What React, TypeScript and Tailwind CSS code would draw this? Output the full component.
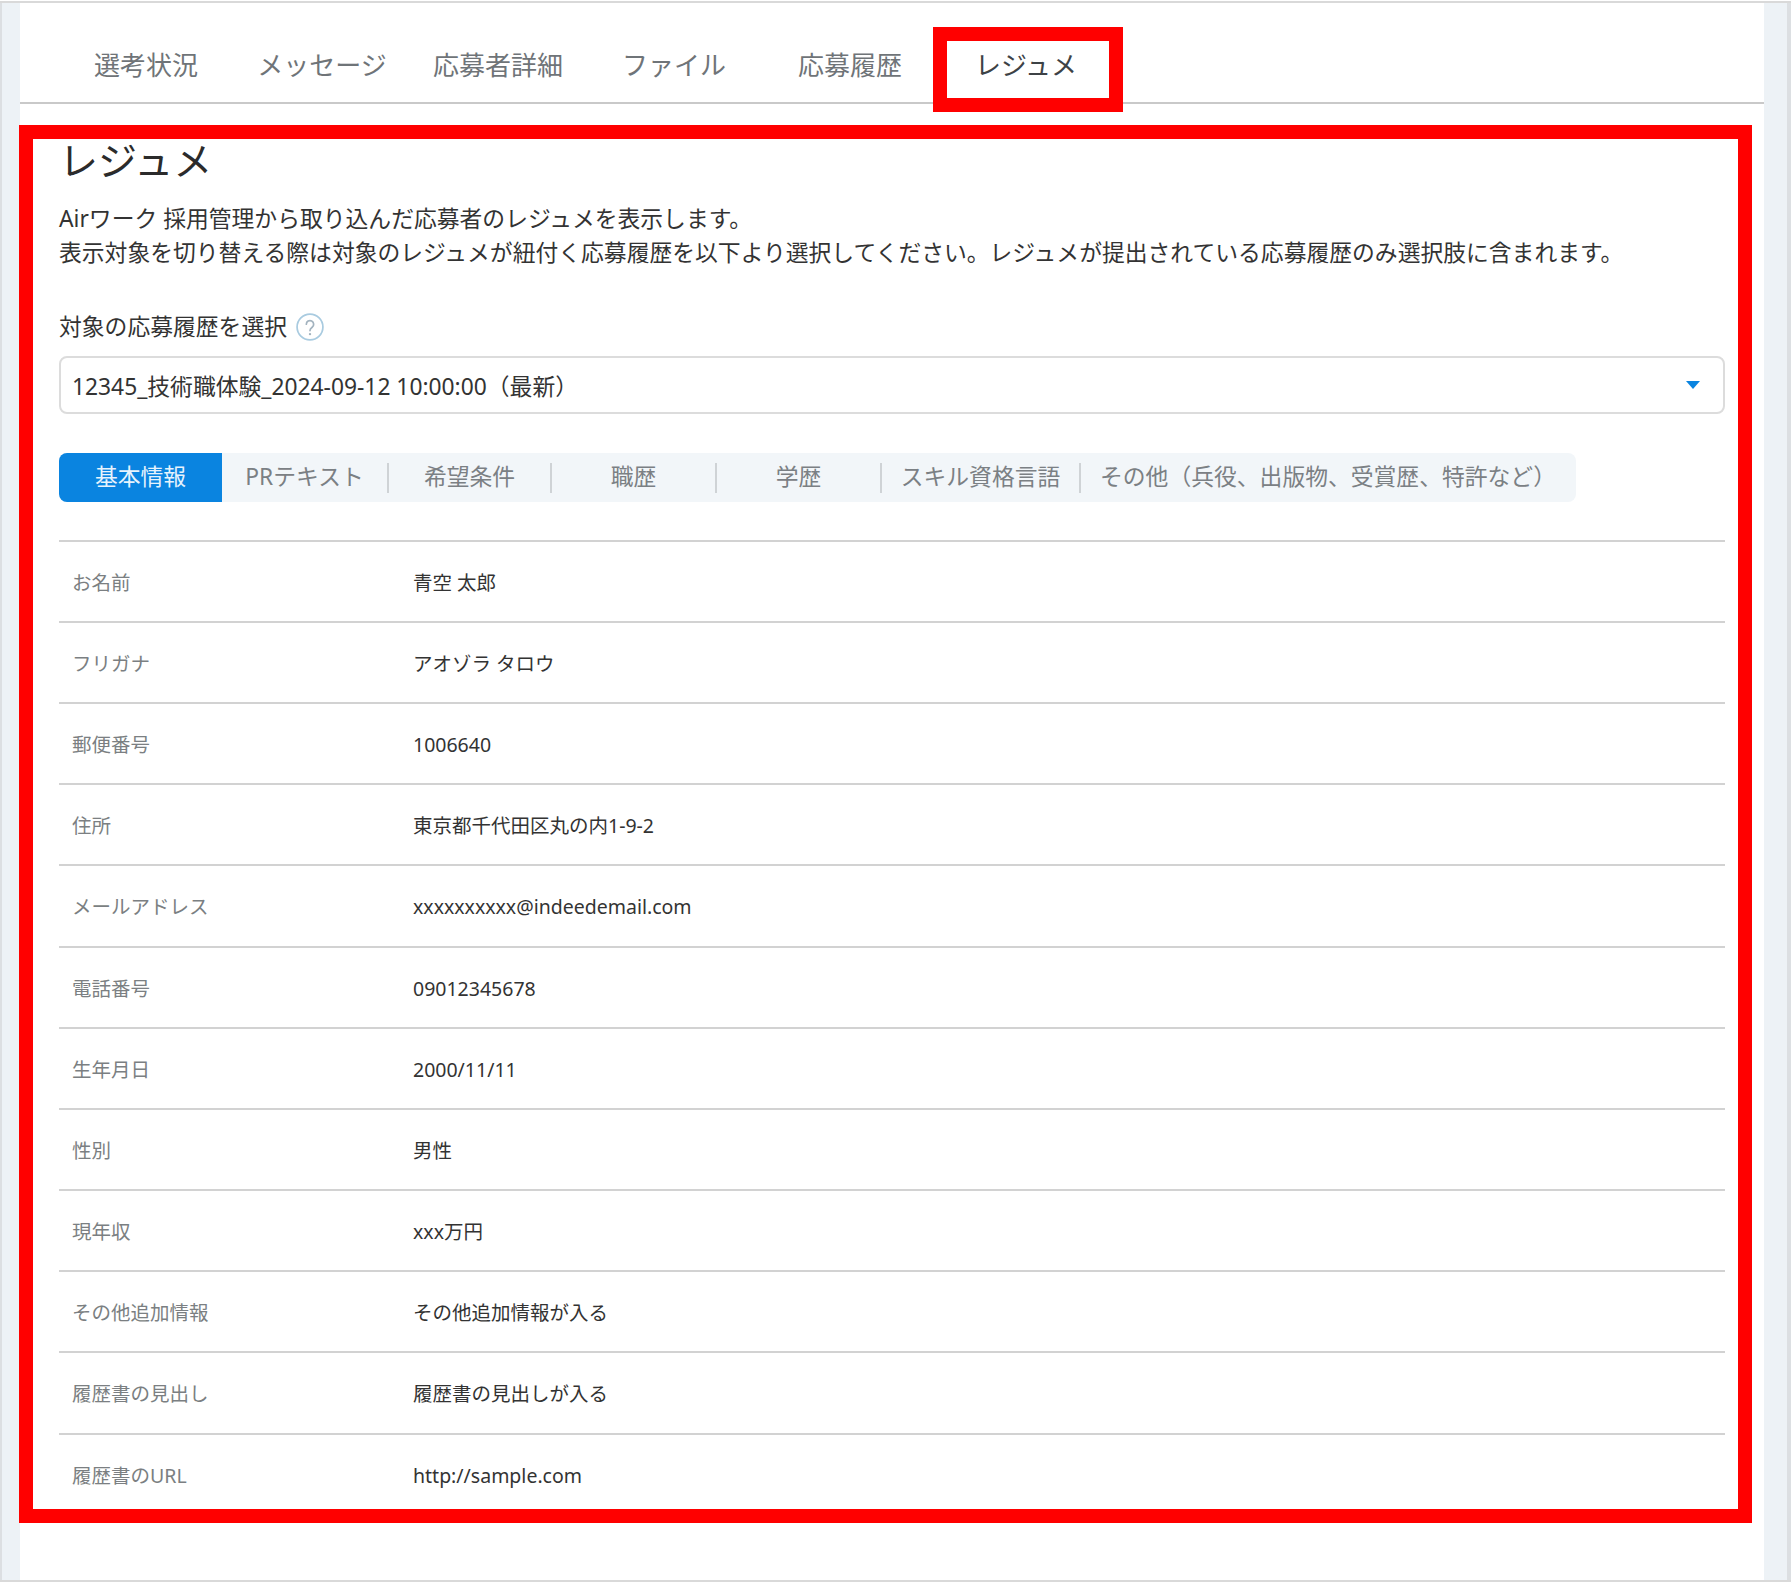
import React from 'react';

const topTabs = ['選考状況', 'メッセージ', '応募者詳細', 'ファイル', '応募履歴'];

const segments = [
  { label: 'PRテキスト', width: 'w-[167px]' },
  { label: '希望条件', width: 'w-[163px]' },
  { label: '職歴', width: 'w-[165px]' },
  { label: '学歴', width: 'w-[165px]' },
  { label: 'スキル資格言語', width: 'w-[199px]' },
];

const rows = [
  ['お名前', '青空 太郎'],
  ['フリガナ', 'アオゾラ タロウ'],
  ['郵便番号', '1006640'],
  ['住所', '東京都千代田区丸の内1-9-2'],
  ['メールアドレス', 'xxxxxxxxxx@indeedemail.com'],
  ['電話番号', '09012345678'],
  ['生年月日', '2000/11/11'],
  ['性別', '男性'],
  ['現年収', 'xxx万円'],
  ['その他追加情報', 'その他追加情報が入る'],
  ['履歴書の見出し', '履歴書の見出しが入る'],
  ['履歴書のURL', 'http://sample.com'],
];

const HelpIcon: React.FC = () => (
  <svg viewBox="0 0 26 26" className="w-[28px] h-[28px] ml-[9px]">
    <circle cx="13" cy="13" r="12" fill="none" stroke="#a9cbe0" strokeWidth="1.6" />
    <path d="M9.6 10.4a3.4 3.4 0 1 1 5.4 2.8c-1.2.9-2 1.5-2 3.1" fill="none" stroke="#a3b3bf" strokeWidth="1.6" strokeLinecap="round" />
    <circle cx="13" cy="19.6" r="1.1" fill="#a3b3bf" />
  </svg>
);

const App: React.FC = () => {
  return (
    <div className="w-[1791px] h-[1584px] bg-white pt-px font-['Noto_Sans','Noto_Sans_CJK_JP',sans-serif] overflow-hidden">
      <div className="flex h-[1581px] border-y-2 border-[#d9d9d9]">
        <div className="w-[20px] shrink-0 bg-[#edf2f6] border-l-2 border-[#dcdfe2]" />

        <main className="w-[1744px] shrink-0">
          <nav className="flex h-[101px] pl-[38px] pt-[24px] border-b-2 border-[#c9c9c9]">
            {topTabs.map((t) => (
              <div key={t} className="w-[176px] h-[76px] flex items-center justify-center text-[26px] text-[#6f7478]">
                {t}
              </div>
            ))}
            <div className="relative w-[176px] h-[76px] flex items-center justify-center text-[26px] text-[#3d4246]">
              レジュメ
              <div className="absolute left-[-5px] top-0 w-[190px] h-[85px] border-[14px] border-[#ff0000]" />
            </div>
          </nav>

          <section className="mt-[21px] -ml-px w-[1733px] h-[1398px] border-[14px] border-[#ff0000] pl-[26px] pr-[13px] overflow-hidden text-[#333]">
            <h1 className="text-[39px] leading-[42px] font-normal text-[#2b2b2b]">レジュメ</h1>
            <p className="mt-[21px] text-[22.8px] leading-[34px]">
              Airワーク 採用管理から取り込んだ応募者のレジュメを表示します。
              <br />
              表示対象を切り替える際は対象のレジュメが紐付く応募履歴を以下より選択してください。レジュメが提出されている応募履歴のみ選択肢に含まれます。
            </p>

            <div className="mt-[40px] flex items-center text-[22.8px] leading-[34px]">
              対象の応募履歴を選択
              <HelpIcon />
            </div>

            <div className="mt-[12px] h-[58px] flex items-center justify-between rounded-[8px] border-2 border-[#dcdcdc] pl-[11px] pr-[23px] text-[22.8px]">
              <span className="pt-[4px]">12345_技術職体験_2024-09-12 10:00:00（最新）</span>
              <svg viewBox="0 0 14 8" className="w-[14px] h-[8px]">
                <path d="M0 0h14L7 8z" fill="#0a84e0" />
              </svg>
            </div>

            <div className="mt-[39px] w-[1517px] h-[49px] flex items-center rounded-[8px] bg-[#f2f6f9] text-[22.8px] text-[#7b8084]">
              <div className="w-[163px] h-full flex items-center justify-center rounded-l-[8px] bg-[#0a84e0] text-[#e6f3fd]">
                基本情報
              </div>
              {segments.map((s) => (
                <div key={s.label} className={`${s.width} h-[30px] flex items-center justify-center border-r-2 border-[#cfd3d6]`}>
                  {s.label}
                </div>
              ))}
              <div className="flex-1 h-[30px] flex items-center pl-[19px]">その他（兵役、出版物、受賞歴、特許など）</div>
            </div>

            <div className="mt-[37.6px]">
              {rows.map(([label, value]) => (
                <div key={label} className="h-[81.2px] flex items-center border-t-2 border-[#d2d2d2] pt-[2px] text-[19.5px]">
                  <div className="w-[354px] pl-[13px] text-[#7b7f82]">{label}</div>
                  <div className="text-[#333]">{value}</div>
                </div>
              ))}
            </div>
          </section>
        </main>

        <div className="w-[27px] shrink-0 bg-[#edf2f6] border-r-[4px] border-[#dcdfe2]" />
      </div>
    </div>
  );
};

export default App;
